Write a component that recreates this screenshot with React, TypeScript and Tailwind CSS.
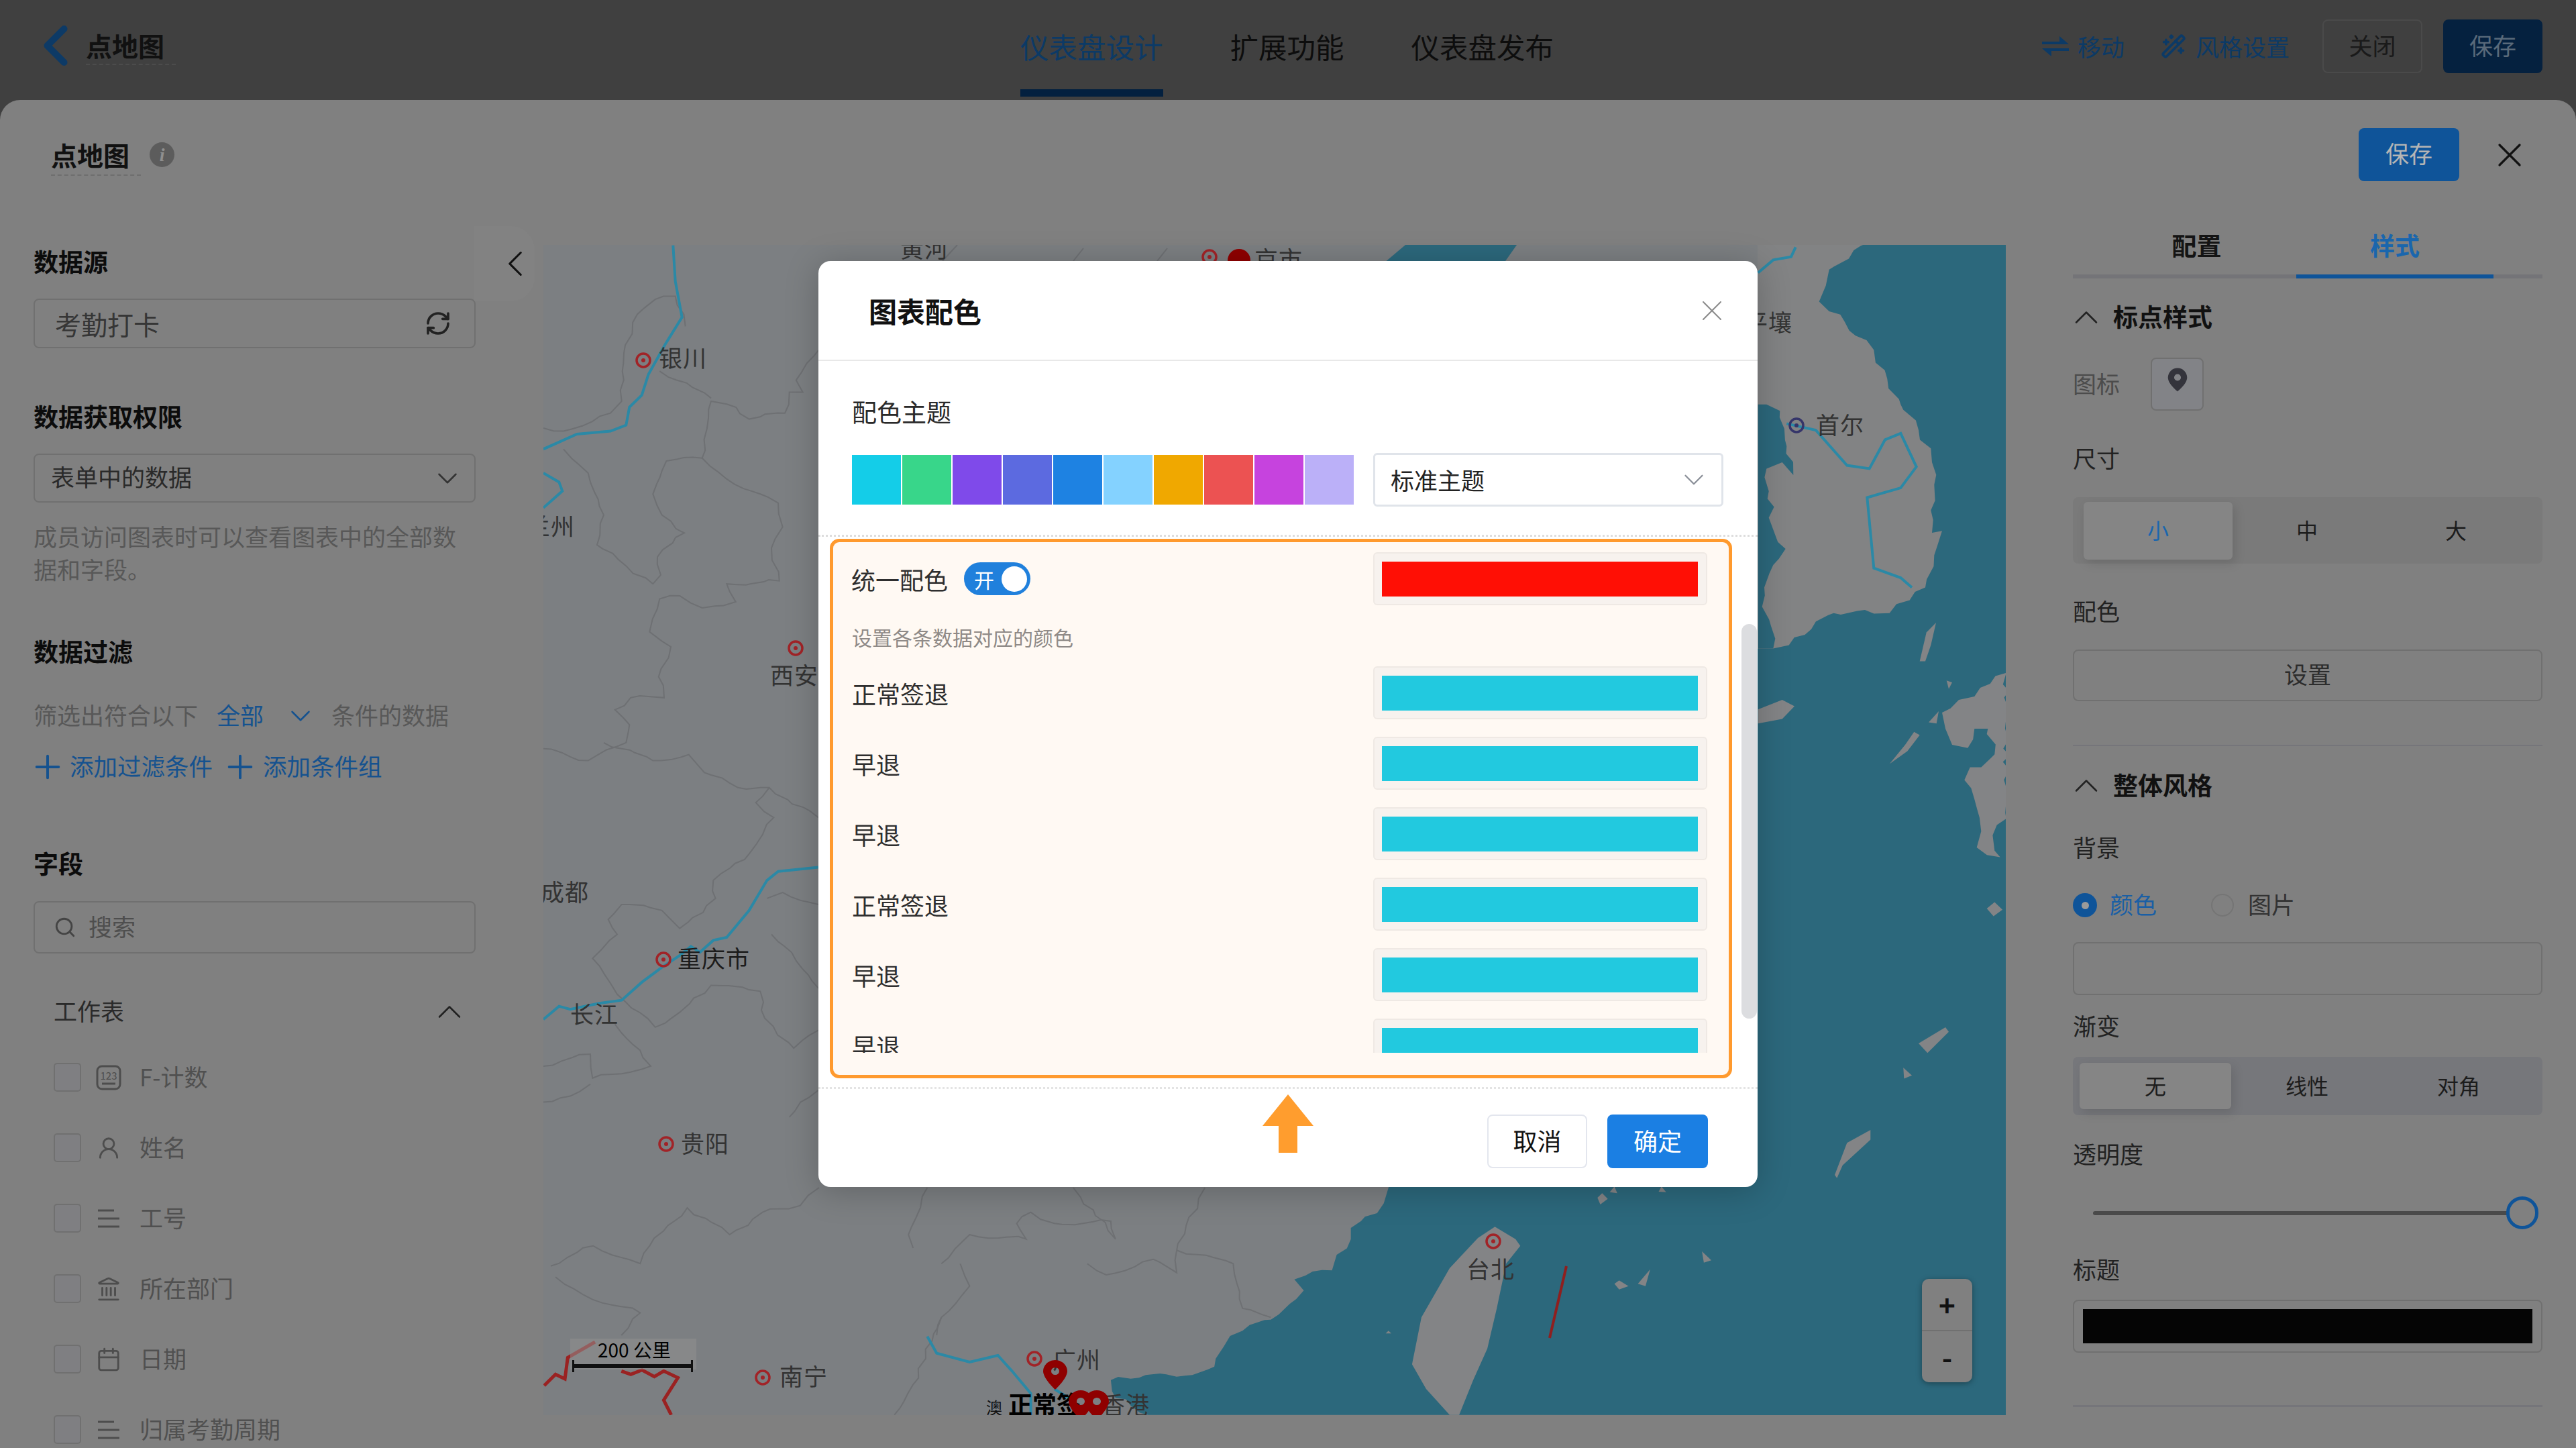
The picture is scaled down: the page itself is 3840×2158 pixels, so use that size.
import {
  ChevronDown,
  ChevronLeft,
  ChevronUp,
  Calendar,
  Landmark,
  Plus,
  RefreshCw,
  Search,
  UserRound,
  WandSparkles,
  X,
} from "lucide-react";

type Pt = [number, number];

// the zoomed crops were read off in their own scale, these bring points back to page px
const leftCrop = ([x, y]: Pt): Pt => [x / 3 + 800, y / 1.12 + 330];
const rightCrop = ([x, y]: Pt): Pt => [x / 3 + 2600, y / 1.045 + 330];
const bottomCrop = ([x, y]: Pt): Pt => [x / 0.7127 + 800, y / 3 + 1750];
const join = (pts: Pt[]) => pts.map(([x, y]) => `${x.toFixed(1)},${y.toFixed(1)}`).join(" ");
const fromLeft = (pts: Pt[]) => join(pts.map(leftCrop));
const fromRight = (pts: Pt[]) => join(pts.map(rightCrop));
const fromBottom = (pts: Pt[]) => join(pts.map(bottomCrop));

// coastlines are jagged in the tiles, roughen the hand-read outline a bit
function jag(pts: Pt[], amp = 5): string {
  const out: Pt[] = [];
  pts.forEach((p, i) => {
    const next = pts[i + 1];
    out.push(p);
    if (!next) return;
    const len = Math.hypot(next[0] - p[0], next[1] - p[1]);
    const steps = Math.floor(len / 13);
    for (let s = 1; s < steps; s++) {
      const t = s / steps;
      const a = Math.sin((i + 1) * 12.9 + s * 78.2) * amp;
      const b = Math.sin((i + 1) * 39.3 + s * 11.7) * amp;
      out.push([p[0] + (next[0] - p[0]) * t + a, p[1] + (next[1] - p[1]) * t + b]);
    }
  });
  return join(out);
}

const leftBorders: Pt[][] = [
  [[30, 345], [120, 350], [330, 320], [380, 300], [390, 220], [450, 155], [530, 130], [620, 125], [665, 175]],
  [[120, 380], [230, 420], [300, 490], [270, 540], [400, 575], [520, 605], [555, 590], [540, 560], [660, 520], [560, 490], [520, 455], [580, 400], [740, 395], [780, 300], [850, 305], [950, 330], [1110, 320], [1130, 285], [1190, 285], [1160, 265], [1260, 215]],
  [[550, 250], [780, 295]],
  [[740, 395], [850, 430], [1000, 455], [1080, 470], [1100, 510], [1050, 545], [1085, 600], [850, 605], [890, 635], [740, 645], [640, 625], [550, 630], [505, 685], [600, 710], [545, 760], [570, 795], [420, 795], [350, 815], [415, 840], [400, 870], [230, 900], [30, 880]],
  [[300, 870], [520, 900], [680, 890], [750, 920], [900, 945], [1040, 945], [1260, 995]],
  [[1040, 945], [980, 970], [1060, 995], [930, 1065], [790, 1100], [800, 1130], [640, 1180], [560, 1150], [380, 1140], [320, 1165], [360, 1190], [250, 1230], [360, 1290], [530, 1345], [640, 1320], [780, 1275], [1000, 1285], [1020, 1330], [1150, 1380], [1260, 1350]],
  [[1030, 1130], [1100, 1120], [1260, 1140]],
  [[1050, 1190], [1140, 1220], [1260, 1280]],
  [[30, 1410], [240, 1390], [250, 1430], [510, 1410], [350, 1340]],
  [[30, 1470], [150, 1460], [240, 1440]],
  [[1130, 1495], [1180, 1470], [1260, 1450]],
];

const bottomBorders: Pt[][] = [
  [[15, 410], [60, 320], [110, 400], [120, 320], [160, 150], [205, 270], [240, 170], [280, 140], [300, 60]],
  [[20, 460], [50, 540], [110, 620], [90, 720]],
  [[400, 330], [395, 270], [415, 60]],
  [[430, 400], [460, 270], [520, 290], [510, 220], [525, 170], [550, 220], [610, 210], [615, 290], [570, 60]],
  [[450, 400], [460, 500], [430, 640], [425, 720]],
  [[680, 340], [740, 400], [750, 600], [780, 640]],
  [[585, 400], [605, 450], [655, 380], [680, 440], [680, 340], [690, 230], [710, 60]],
  [[430, 640], [400, 940], [380, 1076]],
];

const coastBottom: Pt[] = [
  [650, 1076], [615, 1000], [610, 920], [640, 910], [690, 900], [720, 860], [730, 770], [750, 700], [780, 650], [800, 580], [815, 520], [805, 470], [845, 430], [850, 360], [865, 290], [865, 240], [880, 190], [900, 130], [905, 60],
];
const coastKorea: Pt[] = [
  [62, 665], [130, 665], [200, 660], [300, 635], [400, 610], [540, 605], [650, 610], [740, 590], [810, 570], [850, 520], [885, 482], [840, 485], [835, 450], [850, 410], [840, 375], [780, 325], [700, 285], [640, 245], [580, 200], [470, 170], [430, 145], [380, 140], [335, 125], [365, 100], [380, 75], [490, 45], [580, 30],
];
const koreaBay: Pt[] = [
  [62, 285], [100, 285], [160, 295], [190, 350], [220, 395], [170, 375], [100, 385], [110, 420], [130, 480], [185, 510], [130, 535], [90, 570], [80, 600], [120, 630], [130, 665], [62, 665],
];
const kyushu: Pt[] = [
  [885, 765], [960, 745], [1030, 740], [1100, 720], [1172, 703], [1172, 930], [1130, 940], [1120, 980], [1145, 990], [1040, 975], [1060, 950], [1030, 900], [985, 870], [1010, 850], [1060, 850], [1120, 830], [1090, 790], [1030, 790], [1000, 820], [930, 815], [900, 790],
];
const rightIslands: Pt[][] = [
  [[785, 685], [815, 640], [858, 625], [835, 660], [810, 685]],
  [[650, 845], [720, 815], [760, 795], [785, 800], [730, 825]],
  [[62, 760], [170, 745], [225, 755], [170, 775], [62, 782]],
  [[1085, 1070], [1120, 1060], [1155, 1072], [1115, 1082]],
  [[780, 1280], [900, 1255], [915, 1262], [820, 1295]],
  [[712, 1318], [750, 1330], [715, 1335]],
  [[405, 1485], [460, 1435], [565, 1415], [565, 1430], [440, 1470], [415, 1490]],
  [[825, 780], [870, 763], [860, 782]],
  [[905, 715], [930, 718], [915, 728]],
];
const bottomIslands: Pt[][] = [
  [[1018, 235], [1040, 290], [1045, 320], [1030, 400], [1020, 600], [1010, 780], [995, 920], [980, 1076], [970, 1076], [945, 960], [930, 850], [940, 640], [970, 420], [1000, 285]],
  [[1238, 345], [1248, 385], [1240, 395]],
  [[1150, 475], [1160, 500], [1150, 515], [1145, 490]],
  [[1183, 425], [1178, 500], [1170, 490]],
  [[1132, 85], [1138, 110], [1130, 135], [1127, 105]],
  [[1145, 55], [1148, 85], [1140, 80]],
  [[1195, 55], [1200, 80], [1192, 78]],
  [[905, 700], [908, 712], [902, 712]],
];

function Marker({ x, y, color = "#a12327" }: { x: number; y: number; color?: string }) {
  return (
    <g>
      <circle cx={x} cy={y} r={10} fill="none" stroke={color} strokeWidth={3.5} />
      <circle cx={x} cy={y} r={3} fill={color} />
    </g>
  );
}

function MapPinShape({ x, y, w, h }: { x: number; y: number; w: number; h: number }) {
  return (
    <path
      transform={`translate(${x - w / 2} ${y}) scale(${w / 24} ${h / 32})`}
      fillRule="evenodd"
      d="M12 0C5.4 0 0 5.4 0 12c0 8 12 20 12 20s12-12 12-20C24 5.4 18.6 0 12 0zm0 16a4 4 0 1 1 0-8 4 4 0 0 1 0 8z"
      fill="#8f0000"
    />
  );
}

function ChinaMap() {
  const labels: [string, number, number][] = [
    ["银川", 982, 547],
    ["兰州", 785, 798],
    ["西安", 1148, 1020],
    ["成都", 806, 1343],
    ["长江", 850, 1525],
    ["贵阳", 1015, 1718],
    ["南宁", 1162, 2065],
    ["广州", 1569, 2040],
    ["台北", 2186, 1905],
    ["香港", 1642, 2107],
    ["平壤", 2600, 494],
    ["首尔", 2707, 647],
    ["黄河", 1342, 384],
    ["京市", 1870, 400],
  ];

  return (
    <svg viewBox="810 365 2180 1744" className="block h-[1744px] w-[2180px]">
      <rect x={810} y={365} width={2180} height={1744} fill="#7c7f82" />
      <rect x={2620} y={365} width={370} height={1744} fill="#828384" />
      <polygon
        fill="#2c687c"
        points={`2990,365 2990,2109 ${jag(coastBottom.map(bottomCrop))} 2300,1200 ${jag(coastKorea.map(rightCrop))}`}
      />
      <polygon fill="#2c687c" points="2095,365 2261,365 2242,392 2063,392" />
      <polygon fill="#2c687c" points={jag(koreaBay.map(rightCrop))} />
      <polygon fill="#838486" points={jag(kyushu.map(rightCrop))} />
      {rightIslands.map((pts, i) => (
        <polygon key={i} fill="#838486" points={fromRight(pts)} />
      ))}
      {bottomIslands.map((pts, i) => (
        <polygon key={i} fill="#838486" points={fromBottom(pts)} />
      ))}

      <g fill="none" stroke="#6e7073" strokeWidth={2}>
        {leftBorders.map((pts, i) => (
          <polyline key={i} points={jag(pts.map(leftCrop), 3)} />
        ))}
        {bottomBorders.map((pts, i) => (
          <polyline key={i} points={jag(pts.map(bottomCrop), 3)} />
        ))}
        <polyline points="1427,365 1405,389" />
        <polyline points="1615,370 1600,389" />
        <polyline points="1740,370 1725,389" />
      </g>

      <g fill="none" stroke="#2b89a6" strokeWidth={4}>
        <polyline points={fromLeft([[610, 40], [620, 100], [650, 160], [575, 205], [500, 255], [470, 290], [415, 310], [400, 340], [330, 350], [180, 355], [30, 380]])} />
        <polyline points={fromLeft([[30, 420], [100, 435], [115, 450], [30, 478]])} />
        <polyline points={fromLeft([[30, 1332], [100, 1310], [150, 1315], [280, 1305], [380, 1300], [470, 1270], [560, 1245], [640, 1225], [690, 1210], [730, 1220], [790, 1200], [850, 1195], [950, 1150], [1030, 1100], [1080, 1085], [1260, 1078]])} />
        <polyline points={fromBottom([[415, 725], [425, 800], [460, 840], [490, 810], [505, 880], [525, 980], [525, 1076]])} />
        <polyline points={fromBottom([[550, 960], [565, 1000], [575, 1076]])} />
        <polyline points={fromRight([[190, 315], [320, 325], [460, 380], [560, 385], [630, 340], [700, 330], [770, 382], [700, 415], [550, 430], [580, 540], [700, 555], [750, 570]])} />
        <polyline points={fromRight([[230, 40], [210, 55], [130, 60], [62, 80]])} />
      </g>

      <g fill="#333333" fontSize={35} letterSpacing={1}>
        {labels.map(([text, x, y]) => (
          <text key={text} x={x} y={y}>
            {text}
          </text>
        ))}
        <text x={1010} y={1442} fill="#1c1c1c">
          重庆市
        </text>
      </g>

      <Marker x={959} y={537} />
      <Marker x={1186} y={966} />
      <Marker x={989} y={1430} />
      <Marker x={993} y={1705} />
      <Marker x={1137} y={2053} />
      <Marker x={1542} y={2025} />
      <Marker x={2226} y={1850} />
      <Marker x={1803} y={383} />
      <Marker x={2678} y={634} color="#35356a" />
      <circle cx={1847} cy={388} r={17} fill="#8f0000" />

      <line x1={2335} y1={1887} x2={2310} y2={1994} stroke="#8f1f1f" strokeWidth={4} />

      <g fill="none" stroke="#9a2222" strokeWidth={5}>
        <polyline points={fromBottom([[8, 945], [20, 895], [30, 915], [33, 820], [62, 750]])} />
        <polyline points={fromBottom([[90, 880], [100, 895], [112, 875], [125, 905], [135, 880], [150, 910], [135, 1010], [143, 1076]])} />
      </g>

      <rect x={850} y={1995} width={188} height={46} fill="#909090" opacity={0.55} />
      <text x={891} y={2023} fontSize={28} fill="#000">
        200 公里
      </text>
      <rect x={853} y={2033} width={180} height={6} fill="#111" />
      <rect x={853} y={2027} width={3} height={18} fill="#111" />
      <rect x={1030} y={2027} width={3} height={18} fill="#111" />

      <text x={1470} y={2107} fontSize={24} fill="#111">
        澳
      </text>
      <text x={1503} y={2107} fontSize={36} fontWeight={700} fill="#000">
        正常签
      </text>
      <MapPinShape x={1573} y={2027} w={36} h={44} />
      <MapPinShape x={1611} y={2072} w={36} h={44} />
      <MapPinShape x={1635} y={2072} w={36} h={44} />
    </svg>
  );
}

function TripleLine() {
  return (
    <svg viewBox="0 0 38 38" className="h-[38px] w-[38px]" stroke="#4d4d4d" strokeWidth={3}>
      <line x1={3} y1={7} x2={27} y2={7} />
      <line x1={3} y1={19} x2={35} y2={19} />
      <line x1={3} y1={31} x2={35} y2={31} />
    </svg>
  );
}

function NumberIcon() {
  return (
    <svg viewBox="0 0 38 38" className="h-[38px] w-[38px]" fill="none" stroke="#4d4d4d" strokeWidth={3}>
      <rect x={2} y={2} width={34} height={34} rx={7} />
      <line x1={9} y1={28} x2={29} y2={28} />
      <text x={19} y={22} textAnchor="middle" fontSize={15} fill="#4d4d4d" stroke="none">
        123
      </text>
    </svg>
  );
}

function FieldRow({ icon, label }: { icon: React.ReactNode; label: string }) {
  return (
    <div className="flex h-[105px] shrink-0 items-center">
      <div className="h-[43px] w-[41px] rounded-[5px] border-2 border-[#707070] bg-[#7f7f82]" />
      <div className="ml-[22px] flex h-[38px] w-[38px] items-center justify-center">{icon}</div>
      <span className="ml-[27px] pb-[4px] text-[35px] leading-[38px] text-[#505050]">{label}</span>
    </div>
  );
}

function SideTitle({ children, className = "" }: { children: React.ReactNode; className?: string }) {
  return <h3 className={`h-[38px] text-[37px] font-bold leading-[34px] text-[#0c0c0c] ${className}`}>{children}</h3>;
}

function LeftSidebar() {
  return (
    <div className="relative h-full w-[810px] shrink-0 overflow-hidden pl-[50px] pt-[50px]">
      <div className="absolute right-[13px] top-[15px] flex h-[112px] w-[90px] items-center justify-end rounded-r-[36px] bg-[#828282]">
        <ChevronLeft className="-mr-[4px] h-[66px] w-[66px] text-[#111111]" strokeWidth={1.1} />
      </div>

      <div className="w-[659px]">
        <SideTitle>数据源</SideTitle>
        <div className="mt-[35px] flex h-[74px] items-center justify-between rounded-[8px] border-2 border-[#707070] pl-[30px] pr-[34px]">
          <span className="text-[39px] text-[#363636]">考勤打卡</span>
          <RefreshCw className="h-[40px] w-[40px] text-[#222222]" strokeWidth={2.2} />
        </div>

        <SideTitle className="mt-[84px]">数据获取权限</SideTitle>
        <div className="mt-[35px] flex h-[73px] items-center justify-between rounded-[8px] border-2 border-[#707070] pl-[24px] pr-[15px]">
          <span className="pb-[4px] text-[35px] text-[#2a2a2a]">表单中的数据</span>
          <ChevronDown className="h-[50px] w-[50px] text-[#333333]" strokeWidth={1.2} />
        </div>
        <p className="mt-[25px] text-[35px] leading-[49px] text-[#585858]">
          成员访问图表时可以查看图表中的全部数据和字段。
        </p>

        <SideTitle className="mt-[81px]">数据过滤</SideTitle>
        <div className="mt-[57px] flex h-[38px] items-center text-[35px] text-[#585858]">
          <span className="pb-[4px]">筛选出符合以下</span>
          <span className="ml-[28px] pb-[4px] text-[#15528f]">全部</span>
          <ChevronDown className="ml-[30px] h-[50px] w-[50px] text-[#15528f]" strokeWidth={1.2} />
          <span className="ml-[21px] pb-[4px]">条件的数据</span>
        </div>
        <div className="mt-[38px] flex h-[38px] items-center text-[35.5px] text-[#15528f]">
          <Plus className="-ml-[7px] h-[56px] w-[56px]" strokeWidth={1.7} />
          <span className="ml-[5px] pb-[4px]">添加过滤条件</span>
          <Plus className="ml-[13px] h-[56px] w-[56px]" strokeWidth={1.7} />
          <span className="ml-[6px] pb-[4px]">添加条件组</span>
        </div>

        <SideTitle className="mt-[107px]">字段</SideTitle>
        <div className="mt-[36px] flex h-[78px] items-center rounded-[8px] border-2 border-[#707070] pl-[28px]">
          <Search className="h-[34px] w-[34px] text-[#444444]" strokeWidth={2} />
          <span className="ml-[18px] pb-[4px] text-[35px] text-[#4e4e4e]">搜索</span>
        </div>

        <div className="mt-[68px] flex h-[38px] items-center justify-between pl-[30px] pr-[9px]">
          <span className="pb-[4px] text-[35px] text-[#2a2a2a]">工作表</span>
          <ChevronUp className="h-[60px] w-[60px] text-[#222222]" strokeWidth={1} />
        </div>

        <div className="mt-[26px] flex flex-col pl-[30px]">
          <FieldRow icon={<NumberIcon />} label="F-计数" />
          <FieldRow icon={<UserRound className="h-[38px] w-[38px] text-[#4d4d4d]" strokeWidth={1.8} />} label="姓名" />
          <FieldRow icon={<TripleLine />} label="工号" />
          <FieldRow icon={<Landmark className="h-[38px] w-[38px] text-[#4d4d4d]" strokeWidth={1.8} />} label="所在部门" />
          <FieldRow icon={<Calendar className="h-[38px] w-[38px] text-[#4d4d4d]" strokeWidth={1.8} />} label="日期" />
          <FieldRow icon={<TripleLine />} label="归属考勤周期" />
        </div>
      </div>
    </div>
  );
}

function Segmented({
  items,
  active,
  activeText,
  barH,
  pillH,
  pad,
  cell,
  bg,
}: {
  items: string[];
  active: string;
  activeText: string;
  barH: string;
  pillH: string;
  pad: string;
  cell: string;
  bg: string;
}) {
  return (
    <div className={`flex items-center rounded-[8px] ${barH} ${pad} ${bg}`}>
      {items.map((item) =>
        item === active ? (
          <div
            key={item}
            className={`flex items-center justify-center rounded-[6px] bg-[#858585] pb-[4px] text-[32px] shadow-[4px_6px_16px_rgba(0,0,0,0.12)] ${pillH} ${cell} ${activeText}`}
          >
            {item}
          </div>
        ) : (
          <div key={item} className={`flex items-center justify-center pb-[4px] text-[32px] text-[#1c1c1c] ${cell}`}>
            {item}
          </div>
        ),
      )}
    </div>
  );
}

function Label({ children, className = "" }: { children: React.ReactNode; className?: string }) {
  return <div className={`h-[38px] text-[35px] leading-[34px] text-[#222222] ${className}`}>{children}</div>;
}

function SectionTitle({ children, className = "" }: { children: React.ReactNode; className?: string }) {
  return (
    <div className={`flex h-[38px] items-center ${className}`}>
      <ChevronUp className="-ml-[10px] h-[60px] w-[60px] text-[#222222]" strokeWidth={1} />
      <span className="ml-[10px] pb-[2px] text-[37px] font-bold text-[#111111]">{children}</span>
    </div>
  );
}

function RightPanel() {
  return (
    <div className="h-full w-[850px] shrink-0 overflow-hidden pl-[100px] pr-[50px]">
      <div className="flex h-[93px] items-center border-b-[6px] border-[#747478]">
        <div className="flex h-full w-[333px] items-center justify-center pl-[36px] text-[37px] font-bold text-[#141414]">
          配置
        </div>
        <div className="-mb-[6px] flex h-[calc(100%+6px)] w-[294px] items-center justify-center border-b-[6px] border-[#0f5499] text-[37px] font-bold text-[#1a66ad]">
          样式
        </div>
      </div>

      <SectionTitle className="mt-[39px]">标点样式</SectionTitle>

      <div className="mt-[41px] flex h-[79px] items-center">
        <span className="w-[116px] pb-[2px] text-[35px] text-[#4c4c4c]">图标</span>
        <div className="flex h-[79px] w-[79px] items-start justify-center rounded-[8px] border-2 border-[#707070] bg-[#828387] pt-[12px]">
          <svg viewBox="0 0 24 24" className="h-[38px] w-[38px]" fill="#34343c">
            <path
              fillRule="evenodd"
              d="M12 1a9 9 0 0 0-9 9c0 6 9 13 9 13s9-7 9-13a9 9 0 0 0-9-9zm0 12a3.2 3.2 0 1 1 0-6.4 3.2 3.2 0 0 1 0 6.4z"
            />
          </svg>
        </div>
      </div>

      <Label className="mt-[53px]">尺寸</Label>
      <div className="mt-[38px]">
        <Segmented
          items={["小", "中", "大"]}
          active="小"
          activeText="text-[#1a66ad]"
          barH="h-[99px]"
          pillH="h-[86px]"
          pad="pl-[16px]"
          cell="w-[222px]"
          bg="bg-[#7a7a7a]"
        />
      </div>

      <Label className="mt-[53px]">配色</Label>
      <div className="mt-[37px] flex h-[77px] items-center justify-center rounded-[8px] border-2 border-[#707070] pb-[4px] text-[35px] text-[#2c2c2c]">
        设置
      </div>

      <div className="mt-[65px] h-[2px] bg-[#75757a]" />

      <SectionTitle className="mt-[40px]">整体风格</SectionTitle>

      <Label className="mt-[55px]">背景</Label>
      <div className="mt-[47px] flex h-[38px] items-center">
        <div className="flex h-[36px] w-[36px] items-center justify-center rounded-full bg-[#0f5499]">
          <div className="h-[11px] w-[11px] rounded-full bg-[#9a9a9a]" />
        </div>
        <span className="ml-[19px] pb-[4px] text-[35px] text-[#1a5fa5]">颜色</span>
        <div className="ml-[81px] h-[34px] w-[34px] rounded-full border-2 border-[#757575]" />
        <span className="ml-[21px] pb-[4px] text-[35px] text-[#333333]">图片</span>
      </div>
      <div className="mt-[36px] h-[79px] rounded-[8px] border-2 border-[#707070]" />

      <Label className="mt-[28px]">渐变</Label>
      <div className="mt-[26px]">
        <Segmented
          items={["无", "线性", "对角"]}
          active="无"
          activeText="text-[#1c1c1c]"
          barH="h-[87px]"
          pillH="h-[69px]"
          pad="pl-[10px]"
          cell="w-[226px]"
          bg="bg-[#76777b]"
        />
      </div>

      <Label className="mt-[40px]">透明度</Label>
      <div className="mt-[43px] flex h-[49px] items-center pl-[30px] pr-[6px]">
        <div className="h-[6px] flex-1 rounded-full bg-[#4a4a4a]" />
        <div className="-ml-[4px] h-[49px] w-[48px] rounded-full border-[5px] border-[#0f5499] bg-[#808080]" />
      </div>

      <Label className="mt-[42px]">标题</Label>
      <div className="mt-[25px] flex h-[79px] items-center rounded-[8px] border-2 border-[#707070] px-[13px]">
        <div className="h-[51px] flex-1 bg-[#050505]" />
      </div>

      <div className="mt-[78px] h-[3px] bg-[#75757a]" />
    </div>
  );
}

function ColorBox({ color }: { color: string }) {
  return (
    <div className="flex h-[79px] w-[498px] shrink-0 items-center rounded-[6px] border-2 border-[#efe9e4] bg-[#f7f2ee] pl-[11px] pr-[12px]">
      <div className="h-[52px] flex-1" style={{ backgroundColor: color }} />
    </div>
  );
}

function SeriesRow({ name }: { name: string }) {
  return (
    <div className="mt-[26px] flex items-center justify-between first:mt-0">
      <span className="text-[36px] text-[#2e2e2e]">{name}</span>
      <ColorBox color="#22c9df" />
    </div>
  );
}

const swatches = [
  "bg-[#14cde8]",
  "bg-[#38d68a]",
  "bg-[#7f4aea]",
  "bg-[#5c6ae0]",
  "bg-[#1e82e2]",
  "bg-[#84d2ff]",
  "bg-[#f0a800]",
  "bg-[#ec5252]",
  "bg-[#c643de]",
  "bg-[#bbb0f8]",
];

function ColorDialog() {
  return (
    <div className="absolute left-[1220px] top-[389px] h-[1380px] w-[1400px] rounded-[18px] bg-white shadow-[0_6px_50px_rgba(0,0,0,0.22)]">
      <div className="flex h-[149px] items-center justify-between border-b-2 border-[#e8e8e8] pl-[75px] pr-[42px]">
        <span className="text-[42px] font-bold text-[#111111]">图表配色</span>
        <X className="h-[52px] w-[52px] text-[#8a8a8a]" strokeWidth={0.9} />
      </div>

      <div className="pl-[50px] pr-[51px]">
        <div className="mt-[56px] text-[37px] leading-[38px] text-[#2a2a2a]">配色主题</div>
        <div className="mt-[43px] flex h-[80px] items-center">
          <div className="flex h-[74px] w-[748px] gap-[2px]">
            {swatches.map((c) => (
              <div key={c} className={`flex-1 ${c}`} />
            ))}
          </div>
          <div className="ml-[29px] flex h-[80px] flex-1 items-center justify-between rounded-[6px] border-[3px] border-[#e0e4ea] pl-[23px] pr-[16px]">
            <span className="text-[35px] text-[#222222]">标准主题</span>
            <ChevronDown className="h-[50px] w-[50px] text-[#8a8f98]" strokeWidth={1.1} />
          </div>
        </div>
      </div>

      <div className="mt-[42px] border-t-[3px] border-dotted border-[#dddddd]" />

      <div className="ml-[17px] mt-[3px] h-[804px] w-[1345px] rounded-[14px] border-[5px] border-[#ff9a2e] bg-[#fff9f3] pl-[28px] pr-[32px]">
        <div className="h-[761px] overflow-hidden pt-[15px]">
          <div className="flex items-center justify-between">
            <div className="flex items-center">
              <span className="-ml-[1px] text-[36px] text-[#2e2e2e]">统一配色</span>
              <div className="ml-[24px] flex h-[49px] w-[99px] items-center justify-between rounded-full bg-[#2080dc] pl-[15px] pr-[5px]">
                <span className="text-[30px] leading-none text-white">开</span>
                <div className="h-[38px] w-[38px] rounded-full bg-white" />
              </div>
            </div>
            <ColorBox color="#ff0f05" />
          </div>
          <div className="mt-[27px] text-[30px] leading-[40px] text-[#8f8a87]">设置各条数据对应的颜色</div>
          <div className="mt-[24px] flex flex-col">
            <SeriesRow name="正常签退" />
            <SeriesRow name="早退" />
            <SeriesRow name="早退" />
            <SeriesRow name="正常签退" />
            <SeriesRow name="早退" />
            <SeriesRow name="早退" />
          </div>
        </div>
      </div>

      <div className="mt-[13px] border-t-[3px] border-dotted border-[#e4e4e4]" />

      <div className="mt-[38px] flex justify-end gap-[30px] pr-[74px]">
        <div className="flex h-[80px] w-[149px] items-center justify-center rounded-[8px] border-2 border-[#e3e6ee] pb-[4px] text-[36px] text-[#111111]">
          取消
        </div>
        <div className="flex h-[80px] w-[150px] items-center justify-center rounded-[8px] bg-[#1b7fe3] pb-[4px] text-[36px] text-white">
          确定
        </div>
      </div>

      {/* callout arrow on top of the footer */}
      <svg viewBox="0 0 76 87" className="absolute left-[662px] top-[1242px] h-[87px] w-[76px]" fill="#ff9d2e">
        <polygon points="38,0 76,47 52,47 52,87 24,87 24,47 0,47" />
      </svg>

      {/* scrollbar thumb */}
      <div className="absolute left-[1376px] top-[541px] h-[588px] w-[23px] rounded-full bg-[#dcdde0]" />
    </div>
  );
}

function TopBar() {
  return (
    <div className="flex h-[149px] shrink-0 items-start bg-[#404040]">
      <div className="flex h-[136px] w-[1521px] shrink-0 items-center pl-[33px]">
        <ChevronLeft className="h-[100px] w-[100px] text-[#0d3a66]" strokeWidth={2.4} />
        <span className="-ml-[5px] border-b-2 border-dashed border-[#4c4c4c] pr-[17px] text-[39px] font-bold leading-[56px] text-[#111111]">
          点地图
        </span>
      </div>
      <div className="flex gap-[100px]">
        <div className="flex flex-col pt-[46px]">
          <span className="text-[42.5px] leading-[46px] text-[#0c3a66]">仪表盘设计</span>
          <div className="mt-[41px] h-[11px] bg-[#03203f]" />
        </div>
        <div className="pt-[46px] text-[42.5px] leading-[46px] text-[#0d0d0d]">扩展功能</div>
        <div className="pt-[46px] text-[42.5px] leading-[46px] text-[#0d0d0d]">仪表盘发布</div>
      </div>
      <div className="ml-auto flex h-[138px] items-center pr-[50px]">
        <svg viewBox="0 0 40 32" className="h-[32px] w-[40px]" fill="#0c3a66">
          <path d="M0 9h26V1l14 12H0zM40 19v4H14v8L0 19z" />
        </svg>
        <span className="ml-[13px] text-[35px] text-[#0c3a66]">移动</span>
        <WandSparkles className="ml-[54px] h-[38px] w-[38px] text-[#0c3a66]" strokeWidth={2.4} />
        <span className="ml-[14px] text-[35px] text-[#0c3a66]">风格设置</span>
        <div className="ml-[49px] flex h-[80px] w-[149px] items-center justify-center rounded-[8px] border-2 border-[#4a4a4a] pb-[4px] text-[35px] text-[#1a1a1a]">
          关闭
        </div>
        <div className="ml-[31px] flex h-[80px] w-[148px] items-center justify-center rounded-[8px] bg-[#05213f] pb-[4px] text-[35px] text-[#5a6a7a]">
          保存
        </div>
      </div>
    </div>
  );
}

export default function App() {
  return (
    <div className="relative flex h-[2158px] w-[3840px] flex-col overflow-hidden bg-[#404040] font-['Noto_Sans_CJK_SC','Liberation_Sans',sans-serif]">
      <TopBar />

      <div className="flex min-h-0 flex-1 flex-col rounded-t-[30px] bg-[#808080]">
        <div className="flex h-[173px] shrink-0 items-center pb-[10px] pl-[76px] pr-[69px]">
          <span className="border-b-2 border-dashed border-[#6e6e6e] pr-[17px] text-[39px] font-bold leading-[60px] text-[#111111]">
            点地图
          </span>
          <div className="ml-[13px] flex h-[37px] w-[37px] items-center justify-center rounded-full bg-[#5c5c5c] font-['Liberation_Serif',serif] text-[28px] font-bold italic leading-none text-[#8f8f8f]">
            i
          </div>
          <div className="ml-auto flex h-[79px] w-[150px] items-center justify-center rounded-[8px] bg-[#0f5499] pb-[4px] text-[35px] text-[#b5b5b5]">
            保存
          </div>
          <X className="ml-[45px] h-[60px] w-[60px] text-[#111111]" strokeWidth={1.3} />
        </div>

        <div className="flex min-h-0 flex-1">
          <LeftSidebar />
          <div className="relative mt-[43px] h-[1744px] w-[2180px] shrink-0">
            <ChinaMap />
            <div className="absolute bottom-[49px] right-[50px] flex h-[154px] w-[75px] flex-col rounded-[10px] bg-[#808080] shadow-[0_2px_8px_rgba(0,0,0,0.35)]">
              <div className="flex flex-1 items-center justify-center border-b-2 border-[#707070] text-[42px] font-bold leading-none text-[#111111]">
                +
              </div>
              <div className="flex flex-1 items-center justify-center text-[42px] font-bold leading-none text-[#111111]">-</div>
            </div>
          </div>
          <RightPanel />
        </div>
      </div>

      <ColorDialog />
    </div>
  );
}
